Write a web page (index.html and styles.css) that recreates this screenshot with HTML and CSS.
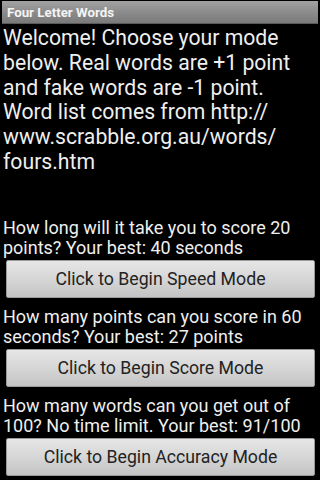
FILE: index.html
```html
<!DOCTYPE html>
<html>
<head>
<meta charset="utf-8">
<link rel="stylesheet" href="styles.css">
</head>
<body>
<div class="screen">
  <div class="titlebar">Four Letter Words</div>
  <div class="content">
    <p class="intro">Welcome! Choose your mode below. Real words are +1 point and fake words are -1 point. Word list comes from http://<br>www.scrabble.org.au/words/<br>fours.htm</p>
    <div class="mode first">
      <p class="question">How long will it take you to score 20 points? Your best: 40 seconds</p>
      <button class="btn">Click to Begin Speed Mode</button>
    </div>
    <div class="mode">
      <p class="question">How many points can you score in 60 seconds? Your best: 27 points</p>
      <button class="btn">Click to Begin Score Mode</button>
    </div>
    <div class="mode">
      <p class="question">How many words can you get out of 100? No time limit. Your best: 91/100</p>
      <button class="btn">Click to Begin Accuracy Mode</button>
    </div>
  </div>
</div>
</body>
</html>
```
FILE: styles.css
```css
html, body {
  margin: 0;
  padding: 0;
  background: #000;
}
body {
  width: 320px;
  height: 480px;
  overflow: hidden;
  font-family: Roboto, "Noto Sans", sans-serif;
  color: #efefef;
}
.screen {
  display: flex;
  flex-direction: column;
  height: 480px;
}
.titlebar {
  margin: 1px 2px 0 2px;
  height: 23px;
  box-sizing: border-box;
  padding-left: 5px;
  background: linear-gradient(#a2a2a2, #8a8a8a 55%, #7a7a7a);
  border-bottom: 1px solid #5a5a5a;
  color: #f4f4f4;
  font-size: 13.3px;
  font-weight: bold;
  line-height: 23px;
}
.content {
  display: flex;
  flex-direction: column;
  padding: 2px 5px 0 3px;
}
.intro {
  margin: 0;
  font-size: 21.2px;
  line-height: 24.8px;
}
.mode {
  display: flex;
  flex-direction: column;
  margin-top: 9px;
}
.mode.first {
  margin-top: 43px;
}
.question {
  margin: 0;
  font-size: 18px;
  line-height: 20px;
}
.btn {
  margin: 2px 0 0 3px;
  height: 38px;
  border: 1px solid #9a9a9a;
  border-radius: 2px;
  background: linear-gradient(#e6e6e6, #d6d6d6 50%, #c4c4c4);
  color: #222;
  font-family: Roboto, "Noto Sans", sans-serif;
  font-size: 17.7px;
  padding: 0;
}
```
